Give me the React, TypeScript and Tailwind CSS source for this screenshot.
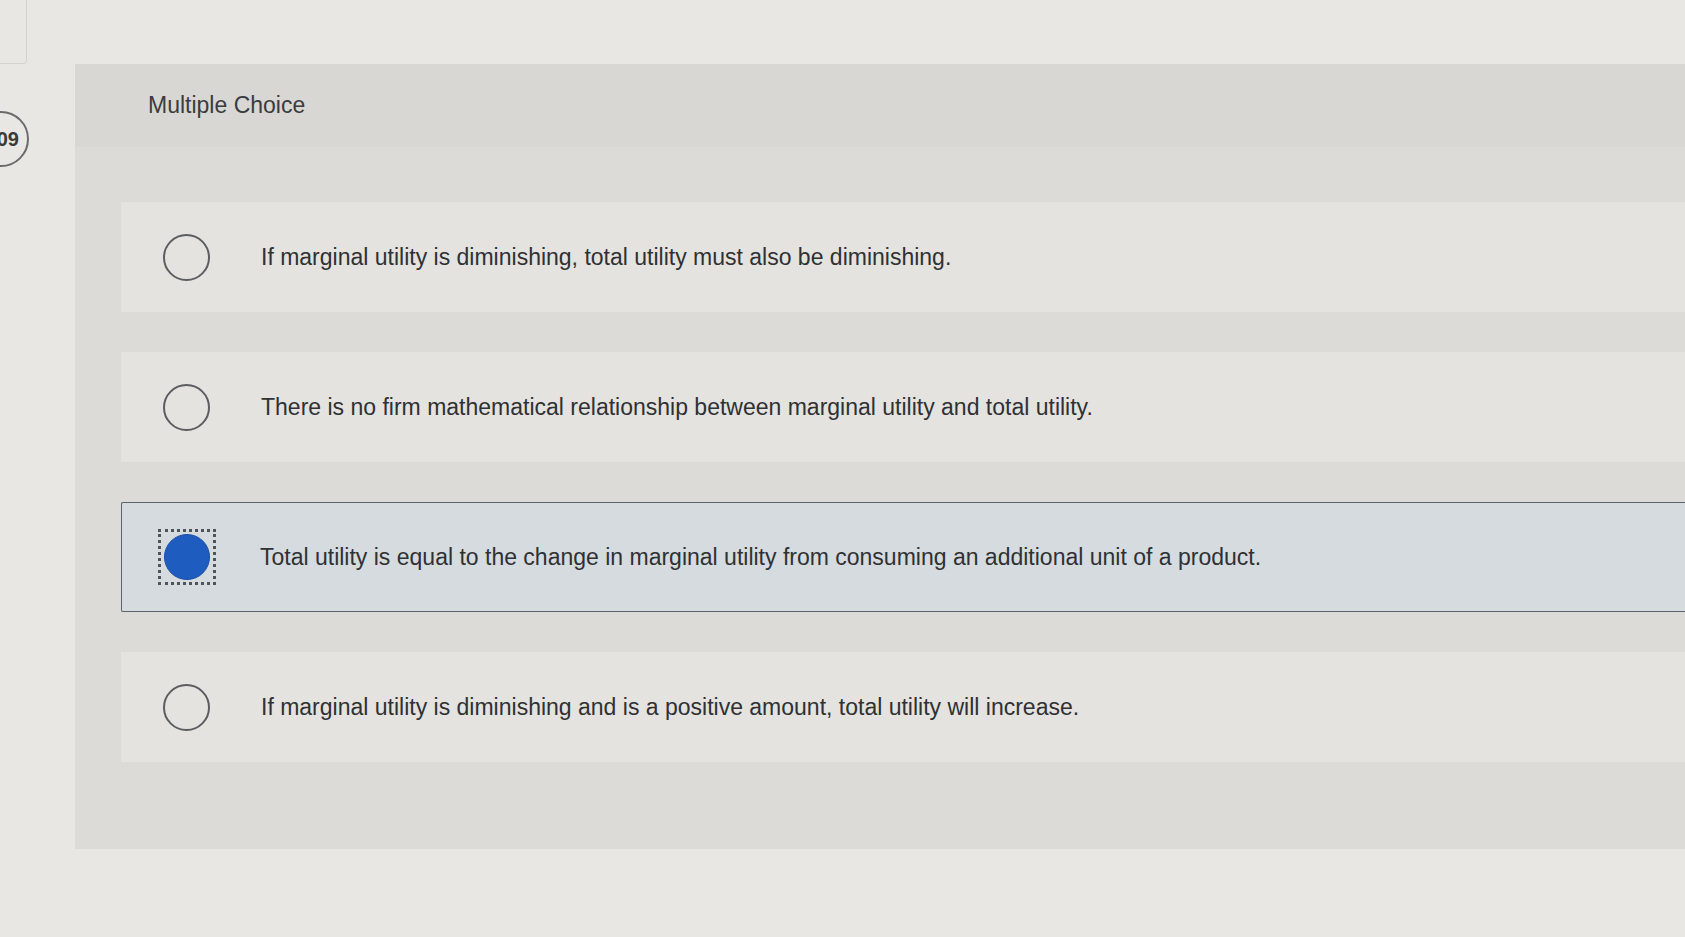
import React from "react";

const options = [
  "If marginal utility is diminishing, total utility must also be diminishing.",
  "There is no firm mathematical relationship between marginal utility and total utility.",
  "Total utility is equal to the change in marginal utility from consuming an additional unit of a product.",
  "If marginal utility is diminishing and is a positive amount, total utility will increase.",
];

export default function App() {
  return (
    <div className="w-[1685px] h-[937px] bg-[#e9e7e3] flex overflow-hidden font-['Liberation_Sans',Arial,sans-serif] text-[#2f3134]">
      {/* left strip */}
      <div className="w-[75px] shrink-0 flex flex-col">
        <div className="w-[27px] h-[64px] border-r border-b border-[#d4d2ce] rounded-br-[4px]" />
        <div className="mt-[47px] -ml-[27px] w-[56px] h-[56px] rounded-full border-2 border-[#6b6b6b] flex items-center justify-end pr-[8px]">
          <span className="text-[20px] font-bold text-[#3a3a3a] leading-none">09</span>
        </div>
      </div>

      {/* panel */}
      <div className="flex-1 mt-[64px] h-[785px] bg-[#dcdbd8] flex flex-col">
        <div className="h-[83px] bg-[#d8d7d4] pl-[73px] flex items-center">
          <span className="text-[23px] text-[#3a3c40]">Multiple Choice</span>
        </div>
        <div className="pl-[46px] pt-[55px] flex flex-col gap-[40px]">
          {options.map((t, i) => {
            const sel = i === 2;
            return (
              <div
                key={i}
                className={
                  sel
                    ? "h-[110px] bg-[#d5dbde] border-[1.5px] border-r-0 border-[#5b626d] rounded-l-[2px] flex items-center pl-[36px]"
                    : "h-[110px] bg-[#e4e3df] flex items-center pl-[42px]"
                }
              >
                {sel ? (
                  <div className="w-[58px] h-[56px] border-[3px] border-dotted border-[#4f535a] flex items-center justify-center mr-[44px]">
                    <div className="w-[46px] h-[46px] rounded-full bg-[#1f5cc0] border border-[#1a4ea6]" />
                  </div>
                ) : (
                  <div className="w-[47px] h-[47px] rounded-full border-2 border-[#5c5d60] mr-[51px]" />
                )}
                <span className="text-[23px]">{t}</span>
              </div>
            );
          })}
        </div>
      </div>
    </div>
  );
}
